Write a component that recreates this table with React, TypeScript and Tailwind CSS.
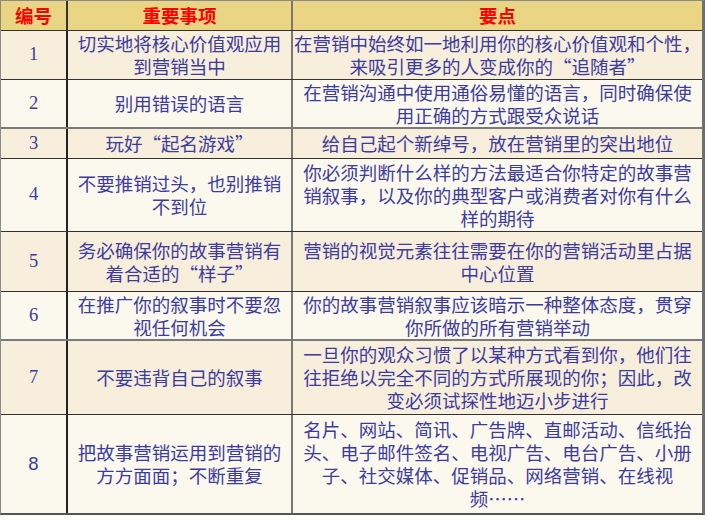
import React from 'react';

interface Row {
  no: string;
  item: string[];
  point: string[];
  height: string;
  bg: string;
  noFont?: string;
}

const ODD = 'bg-[#f7eedb]';
const EVEN = 'bg-[#fbf8ee]';

const rows: Row[] = [
  { no: '1', item: ['切实地将核心价值观应用', '到营销当中'], point: ['在营销中始终如一地利用你的核心价值观和个性，', '来吸引更多的人变成你的“追随者”'], height: 'h-[49px]', bg: ODD },
  { no: '2', item: ['别用错误的语言'], point: ['在营销沟通中使用通俗易懂的语言，同时确保使', '用正确的方式跟受众说话'], height: 'h-[49px]', bg: EVEN },
  { no: '3', item: ['玩好“起名游戏”'], point: ['给自己起个新绰号，放在营销里的突出地位'], height: 'h-[30px]', bg: ODD },
  { no: '4', item: ['不要推销过头，也别推销', '不到位'], point: ['你必须判断什么样的方法最适合你特定的故事营', '销叙事，以及你的典型客户或消费者对你有什么', '样的期待'], height: 'h-[73px]', bg: EVEN },
  { no: '5', item: ['务必确保你的故事营销有', '着合适的“样子”'], point: ['营销的视觉元素往往需要在你的营销活动里占据', '中心位置'], height: 'h-[60px]', bg: ODD },
  { no: '6', item: ['在推广你的叙事时不要忽', '视任何机会'], point: ['你的故事营销叙事应该暗示一种整体态度，贯穿', '你所做的所有营销举动'], height: 'h-[49px]', bg: EVEN },
  { no: '7', item: ['不要违背自己的叙事'], point: ['一旦你的观众习惯了以某种方式看到你，他们往', '往拒绝以完全不同的方式所展现的你；因此，改', '变必须试探性地迈小步进行'], height: 'h-[74px]', bg: ODD },
  { no: '8', item: ['把故事营销运用到营销的', '方方面面；不断重复'], point: ['名片、网站、简讯、广告牌、直邮活动、信纸抬', '头、电子邮件签名、电视广告、电台广告、小册', '子、社交媒体、促销品、网络营销、在线视', '频……'], height: 'h-[98px]', bg: EVEN, noFont: "font-['Liberation_Sans',sans-serif]" },
];

const Lines: React.FC<{ lines: string[] }> = ({ lines }) => (
  <div className="flex flex-col items-center leading-[23px]">
    {lines.map((l, i) => (
      <span key={i} className="whitespace-nowrap">{l}</span>
    ))}
  </div>
);

export default function App() {
  return (
    <div className="w-[707px] h-[521px] bg-white">
      <div className="w-[705px] border-t border-l border-[#8a8a8a] border-r-[3px] border-r-[#707070] border-b-2 border-b-[#555] font-['Noto_Sans_CJK_SC',sans-serif] text-[18.5px] text-[#3c3ca0]">
        {/* header */}
        <div className="grid grid-cols-[67px_225px_1fr] h-[30px] bg-[#ead584] border-b border-[#333] text-[#ff0000] font-bold">
          <div className="flex items-center justify-center border-r-2 border-[#333]">编号</div>
          <div className="flex items-center justify-center border-r-2 border-[#777]">重要事项</div>
          <div className="flex items-center justify-center">要点</div>
        </div>

        {rows.map((r, i) => (
          <div
            key={r.no}
            className={`grid grid-cols-[67px_225px_1fr] ${r.height} ${r.bg} ${
              i === rows.length - 1 ? '' : i === 1 || i === 5 ? 'border-b-2 border-[#7a7a7a]' : 'border-b border-[#333]'
            }`}
          >
            <div className={`flex items-center justify-center border-r-2 border-[#222] ${r.noFont ?? "font-['Liberation_Serif',serif]"}`}>
              {r.no}
            </div>
            <div className="flex items-center justify-center border-r-2 border-[#777]">
              <Lines lines={r.item} />
            </div>
            <div className="flex items-center justify-center">
              <Lines lines={r.point} />
            </div>
          </div>
        ))}
      </div>
    </div>
  );
}
